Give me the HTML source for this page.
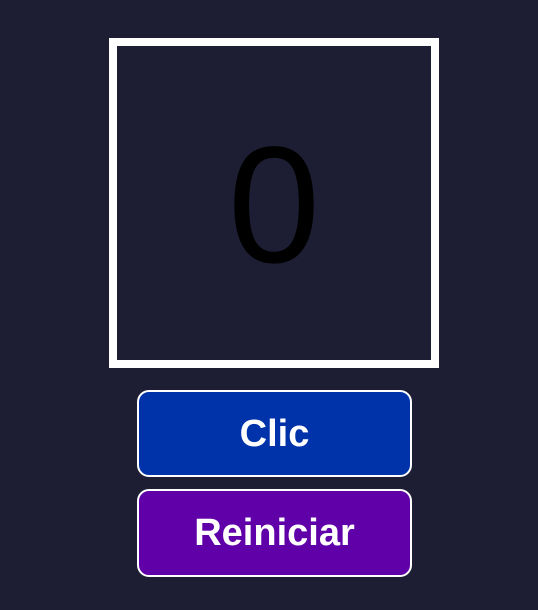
<!DOCTYPE html>
<html><head><style>
html,body{margin:0;padding:0;background:#1d1e33;width:538px;height:610px;overflow:hidden;font-family:"Liberation Sans",Arial,sans-serif;}
.box{position:absolute;left:109px;top:38px;width:314px;height:314px;border:8px solid #fff;background:#1d1e33;}
.num{position:absolute;left:0;right:0;top:0;bottom:0;text-align:center;line-height:320px;font-size:166px;color:#000;}
.btn{position:absolute;left:137px;width:271px;border:2px solid #fff;border-radius:12px;color:#fff;font-weight:bold;font-size:38px;text-align:center;}
.b1{top:390px;height:83px;line-height:85px;background:#0033aa;}
.b2{top:489px;height:84px;line-height:84px;background:#5f00a8;}
</style></head><body>
<div class="box"><div class="num">0</div></div>
<div class="btn b1">Clic</div>
<div class="btn b2">Reiniciar</div>
</body></html>
